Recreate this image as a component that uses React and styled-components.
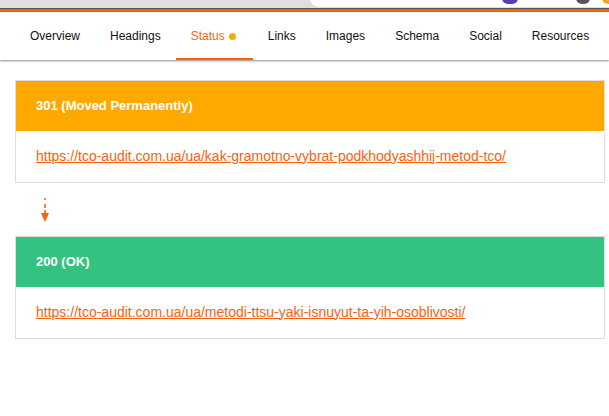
import React from 'react';
import styled, { createGlobalStyle } from 'styled-components';

const Global = createGlobalStyle`
  html, body { margin: 0; padding: 0; background: #fff; }
  body { font-family: "Liberation Sans", Arial, sans-serif; width: 609px; height: 416px; overflow: hidden; }
`;

const Chrome = styled.div`
  height: 8px;
  background: #dfdfdf;
  border-bottom: 1px solid #555;
  position: relative;
  overflow: hidden;
`;
const Omni = styled.div`
  position: absolute; left: 310px; right: -20px; top: -10px; height: 17px;
  background: #fff; border-radius: 10px;
`;
const Ext = styled.div`
  position: absolute; top: -8px; left: ${p => p.$x}px; width: ${p => p.$w}px; height: 12px;
  background: ${p => p.$c}; border-radius: 6px;
`;
const Accent = styled.div`
  height: 3px; background: #ff5f0a;
`;
const Nav = styled.nav`
  display: flex;
  height: 48px;
  box-shadow: 0 1px 2px rgba(0,0,0,.45);
  padding-left: 15px;
  background: #fff;
`;
const Tab = styled.a`
  display: flex; align-items: center;
  padding: ${p => p.$active ? '2px' : '1px'} 15px 0;
  font-size: 12px;
  color: ${p => p.$active ? '#ff5f0a' : '#111'};
  border-bottom: 2px solid ${p => p.$active ? '#ff5f0a' : 'transparent'};
`;
const Dot = styled.span`
  width: 7px; height: 7px; border-radius: 50%; background: #ffa800;
  margin: 0 2px 0 4px;
`;
const Main = styled.main`
  display: flex; flex-direction: column;
  padding: 20px 4px 0 15px;
`;
const Card = styled.section`
  border: 1px solid #deded6;
  border-top-color: #dedede;
`;
const Head = styled.div`
  height: 50px; box-sizing: border-box; display: flex; align-items: center; padding: 0 20px 2px;
  background: ${p => p.$c}; color: #fff; font-size: 13px; font-weight: 700;
`;
const Body = styled.div`
  height: 51px; display: flex; align-items: center; padding: 0 20px 2px; background: #fff;
  box-sizing: border-box;
`;
const Url = styled.a`
  font-size: 14px; color: #ff5f0a; text-decoration: underline;
`;
const ArrowWrap = styled.div`
  height: 53px; display: flex; align-items: center; padding-left: 25px;
`;

const tabs = [['Overview'],['Headings'],['Status',true],['Links'],['Images'],['Schema'],['Social'],['Resources']];

export default function App() {
  return (
    <>
      <Global />
      <Chrome>
        <Omni />
        <Ext $x={502} $w={16} $c="#5a3ab8" />
        <Ext $x={576} $w={14} $c="#555" />
        <Ext $x={602} $w={14} $c="#f5a623" />
      </Chrome>
      <Accent />
      <Nav>
        {tabs.map(([t, a]) => (
          <Tab key={t} $active={a}>{t}{a && <Dot />}</Tab>
        ))}
      </Nav>
      <Main>
        <Card>
          <Head $c="#ffa800">301 (Moved Permanently)</Head>
          <Body><Url>https://tco-audit.com.ua/ua/kak-gramotno-vybrat-podkhodyashhij-metod-tco/</Url></Body>
        </Card>
        <ArrowWrap>
          <svg width="10" height="27" viewBox="0 0 10 27">
            <path d="M5 2v2M5 8v4M5 14v4" stroke="#ff5f0a" strokeWidth="2" fill="none" opacity=".8" />
            <path d="M1 17h8l-4 9z" fill="#ff5f0a" />
          </svg>
        </ArrowWrap>
        <Card>
          <Head $c="#33c27f">200 (OK)</Head>
          <Body><Url>https://tco-audit.com.ua/ua/metodi-ttsu-yaki-isnuyut-ta-yih-osoblivosti/</Url></Body>
        </Card>
      </Main>
    </>
  );
}
